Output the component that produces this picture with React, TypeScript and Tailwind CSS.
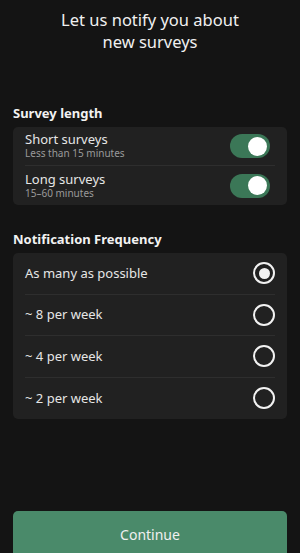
import React, { useState } from 'react';

const font = { fontFamily: '"Noto Sans", "Open Sans", sans-serif' };

type ToggleProps = { on: boolean; onChange: () => void };

const Toggle: React.FC<ToggleProps> = ({ on, onChange }) => (
  <button
    type="button"
    onClick={onChange}
    className={`flex h-[24px] w-[40px] shrink-0 items-center rounded-full px-[3px] ${on ? 'justify-end bg-[#3b7757]' : 'justify-start bg-[#555555]'}`}
  >
    <span className="h-[19px] w-[19px] rounded-full bg-white" />
  </button>
);

const Radio: React.FC<{ checked: boolean }> = ({ checked }) => (
  <span className="flex h-[22px] w-[22px] shrink-0 items-center justify-center rounded-full border-2 border-[#f2f2f2]">
    {checked && <span className="h-[11px] w-[11px] rounded-full bg-[#f2f2f2]" />}
  </span>
);

const frequencies = ['As many as possible', '~ 8 per week', '~ 4 per week', '~ 2 per week'];

export default function App() {
  const [shortOn, setShortOn] = useState(true);
  const [longOn, setLongOn] = useState(true);
  const [freq, setFreq] = useState(0);

  return (
    <div style={font} className="flex h-[553px] w-[300px] flex-col overflow-hidden bg-[#141414] text-[#ececec]">
      <h1 className="pt-[9px] text-center text-[16.5px] font-normal leading-[22px] text-[#f0f0f0]">
        Let us notify you about
        <br />
        new surveys
      </h1>

      <div className="px-[13px] pt-[51px]">
        <h2 className="mb-[5px] text-[13px] font-bold leading-[18px] text-[#f2f2f2]">Survey length</h2>
        <div className="rounded-[5px] bg-[#212121] pl-[12px] pr-[17px]">
          <div className="-mr-[5px] flex h-[39px] items-center justify-between border-b border-[#2e2e2e] pr-[5px]">
            <div className="flex flex-col">
              <span className="text-[13px] leading-[15px] text-[#e6e6e6]">Short surveys</span>
              <span className="text-[10px] leading-[13px] text-[#9a9a9a]">Less than 15 minutes</span>
            </div>
            <Toggle on={shortOn} onChange={() => setShortOn(v => !v)} />
          </div>
          <div className="flex h-[39px] items-center justify-between">
            <div className="flex flex-col">
              <span className="text-[13px] leading-[15px] text-[#e6e6e6]">Long surveys</span>
              <span className="text-[10px] leading-[13px] text-[#9a9a9a]">15–60 minutes</span>
            </div>
            <Toggle on={longOn} onChange={() => setLongOn(v => !v)} />
          </div>
        </div>

        <h2 className="mb-[5px] mt-[25px] text-[13px] font-bold leading-[18px] text-[#f2f2f2]">Notification Frequency</h2>
        <div className="rounded-[5px] bg-[#212121] px-[12px]">
          {frequencies.map((label, i) => (
            <button
              key={label}
              type="button"
              onClick={() => setFreq(i)}
              className={`flex h-[41.5px] w-full items-center justify-between text-left ${i < frequencies.length - 1 ? 'border-b border-[#2e2e2e]' : ''}`}
            >
              <span className="text-[13px] text-[#e6e6e6]">{label}</span>
              <Radio checked={freq === i} />
            </button>
          ))}
        </div>
      </div>

      <div className="mt-auto px-[13px]">
        <button
          type="button"
          className="flex h-[42px] w-full items-start justify-center rounded-t-[5px] bg-[#4a8a6a] pt-[13px] text-[14px] text-[#f0f0f0]"
        >
          Continue
        </button>
      </div>
    </div>
  );
}
